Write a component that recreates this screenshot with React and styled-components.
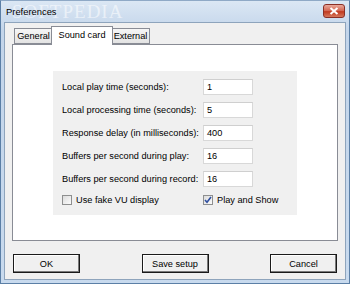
import React from "react";
import styled, { createGlobalStyle } from "styled-components";

const GlobalStyle = createGlobalStyle`
  html, body { margin: 0; padding: 0; background: #ffffff; }
  body { font-family: "Liberation Sans", Arial, sans-serif; font-size: 9px; color: #000; }
  * { box-sizing: border-box; }
`;

const Window = styled.div`
  position: relative;
  width: 350px;
  height: 284px;
  display: flex;
  flex-direction: column;
  padding: 0 3px 3px 3px;
  background: linear-gradient(#dbe7f4, #c3d5ea 30px, #c8daee);
  border: 1px solid #5b7fa6;
  border-top-color: #8fa9c6;
  overflow: hidden;
`;

const TitleBar = styled.div`
  position: relative;
  height: 21px;
  flex: none;
  display: flex;
  align-items: center;
  justify-content: space-between;
  padding-left: 2px;
  padding-right: 1px;
`;

const Title = styled.span`
  font-size: 9.4px;
  color: #000;
  position: relative;
  z-index: 2;
`;

const Watermark = styled.span`
  position: absolute;
  left: 8px;
  top: 0px;
  font-family: "Liberation Serif", serif;
  font-size: 19px;
  letter-spacing: 1px;
  color: rgba(255, 255, 255, 0.55);
  pointer-events: none;
  z-index: 1;
`;

const CloseButton = styled.div`
  width: 22px;
  height: 14px;
  margin-top: -2px;
  border-radius: 3px;
  border: 1px solid #8a2f26;
  background: linear-gradient(#e9a99c, #d2644f 50%, #c0391f 55%, #d5775c);
  display: flex;
  align-items: center;
  justify-content: center;
`;

const Client = styled.div`
  flex: 1;
  background: #f0f0f0;
  border: 1px solid #8ea4bc;
  display: flex;
  flex-direction: column;
  padding: 3px 7px 0 7px;
`;

const TabStrip = styled.div`
  display: flex;
  align-items: flex-end;
  height: 18px;
  padding-left: 2px;
  position: relative;
  z-index: 1;
`;

const Tab = styled.div`
  height: ${(p) => (p.$active ? "19px" : "16px")};
  width: ${(p) => p.$w}px;
  margin: ${(p) => (p.$active ? "0 -2px -1px -2px" : "0")};
  padding-top: ${(p) => (p.$active ? "3px" : "2px")};
  text-align: center;
  font-size: 9.2px;
  white-space: nowrap;
  border: 1px solid #898c95;
  border-bottom: ${(p) => (p.$active ? "none" : "1px solid #898c95")};
  background: ${(p) => (p.$active ? "#ffffff" : "linear-gradient(#f6f6f6, #e3e3e3)")};
  position: relative;
  z-index: ${(p) => (p.$active ? 2 : 1)};
`;

const TabPanel = styled.div`
  height: 197px;
  background: #ffffff;
  border: 1px solid #898c95;
  padding: 26px 0 0 40px;
`;

const Group = styled.div`
  width: 244px;
  height: 144px;
  background: #f0f0f0;
  padding: 8px 9px 0 9px;
  display: flex;
  flex-direction: column;
`;

const Fields = styled.div`
  display: grid;
  grid-template-columns: 141px 50px;
  grid-auto-rows: 16px;
  row-gap: 7px;
  align-items: center;
`;

const Label = styled.span`
  font-size: 9.2px;
  white-space: nowrap;
`;

const Input = styled.div`
  height: 16px;
  background: #ffffff;
  border: 1px solid #d8d8d8;
  border-top-color: #cfcfcf;
  padding: 2px 0 0 3px;
  font-size: 9.2px;
`;

const CheckRow = styled.div`
  display: grid;
  grid-template-columns: 141px auto;
  margin-top: 8px;
`;

const CheckLabel = styled.label`
  display: flex;
  align-items: center;
  gap: 4px;
  font-size: 9.2px;
  white-space: nowrap;
`;

const Box = styled.span`
  width: 10px;
  height: 10px;
  flex: none;
  border: 1px solid #8e8f8f;
  background: linear-gradient(135deg, #dcdcdc, #fbfbfb);
  display: flex;
  align-items: center;
  justify-content: center;
`;

const ButtonRow = styled.div`
  display: flex;
  justify-content: space-between;
  margin-top: 13px;
  padding: 0 1px 0 1px;
`;

const Button = styled.div`
  width: 67px;
  height: 19px;
  border: 1px solid #1a1a1a;
  box-shadow: inset -1px -1px 0 #7a7a7a, inset 1px 1px 0 #ffffff;
  background: #f0f0f0;
  display: flex;
  align-items: center;
  justify-content: center;
  font-size: 9.2px;
`;

const Check = ({ checked }) => (
  <Box>
    {checked && (
      <svg width="8" height="8" viewBox="0 0 8 8">
        <path d="M1 4 L3 6.3 L7 1" fill="none" stroke="#2f4fa0" strokeWidth="1.6" />
      </svg>
    )}
  </Box>
);

const fields = [
  ["Local play time (seconds):", "1"],
  ["Local processing time (seconds):", "5"],
  ["Response delay (in milliseconds):", "400"],
  ["Buffers per second during play:", "16"],
  ["Buffers per second during record:", "16"],
];

export default function App() {
  return (
    <>
      <GlobalStyle />
      <Window>
        <TitleBar>
          <Watermark>SOFTPEDIA</Watermark>
          <Title>Preferences</Title>
          <CloseButton>
            <svg width="10" height="8" viewBox="0 0 10 8">
              <path d="M1.5 1 L8.5 7 M8.5 1 L1.5 7" stroke="#ffffff" strokeWidth="2" />
            </svg>
          </CloseButton>
        </TitleBar>
        <Client>
          <TabStrip>
            <Tab $w={39}>General</Tab>
            <Tab $w={62} $active>Sound card</Tab>
            <Tab $w={39}>External</Tab>
          </TabStrip>
          <TabPanel>
            <Group>
              <Fields>
                {fields.map(([l, v]) => (
                  <React.Fragment key={l}>
                    <Label>{l}</Label>
                    <Input>{v}</Input>
                  </React.Fragment>
                ))}
              </Fields>
              <CheckRow>
                <CheckLabel>
                  <Check />
                  Use fake VU display
                </CheckLabel>
                <CheckLabel>
                  <Check checked />
                  Play and Show
                </CheckLabel>
              </CheckRow>
            </Group>
          </TabPanel>
          <ButtonRow>
            <Button>OK</Button>
            <Button>Save setup</Button>
            <Button>Cancel</Button>
          </ButtonRow>
        </Client>
      </Window>
    </>
  );
}
